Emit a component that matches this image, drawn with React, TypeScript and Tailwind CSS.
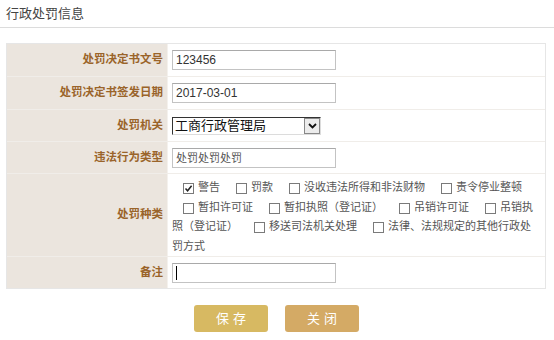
import React from "react";

const FONT = { fontFamily: '"Liberation Sans", "Noto Sans CJK SC", sans-serif' };

function Box({ checked = false }: { checked?: boolean }) {
  return (
    <span className="inline-flex items-center justify-center w-[11px] h-[11px] border border-[#7a7a7a] bg-white mr-[4px] shrink-0 relative top-[1px]">
      {checked && (
        <svg width="9" height="9" viewBox="0 0 9 9">
          <path d="M1.5 4.5 L3.6 6.8 L7.6 1.8" stroke="#222" strokeWidth="1.5" fill="none" />
        </svg>
      )}
    </span>
  );
}

function Item({ checked = false, text, ml = 16 }: { checked?: boolean; text: string; ml?: number }) {
  return (
    <span className="inline-flex items-center whitespace-nowrap" style={{ marginLeft: ml }}>
      <Box checked={checked} />
      <span>{text}</span>
    </span>
  );
}

function Label({ children }: { children: React.ReactNode }) {
  return (
    <div className="bg-[#ebe5de] flex items-center justify-end pr-[4px] text-[11.5px] font-bold text-[#9a642a] border-r border-[#f4f1ed]">
      {children}
    </div>
  );
}

function TextBox({ value, caret = false }: { value?: string; caret?: boolean }) {
  return (
    <div className="w-[164px] h-[20px] border border-[#c3c3c3] border-t-[#a9a9a9] bg-white text-[12px] text-[#333] leading-[16px] pl-[3px] flex items-start pt-[1px]">
      {caret ? <span className="inline-block w-[1px] h-[14px] bg-black mt-[1px]" /> : value}
    </div>
  );
}

export default function App() {
  return (
    <div className="w-[554px] h-[340px] bg-white relative" style={FONT}>
      <div className="h-[28px] border-b border-[#dcdcdc] pl-[6px] flex items-center text-[13px] text-[#444]">
        行政处罚信息
      </div>
      <div className="mx-[6px] mt-[15px] border border-[#e6e6e6] w-[540px]">
        <div className="grid grid-cols-[161px_1fr] h-[33px] border-b border-[#f0ede9]">
          <Label>处罚决定书文号</Label>
          <div className="flex items-center pl-[4px]"><TextBox value="123456" /></div>
        </div>
        <div className="grid grid-cols-[161px_1fr] h-[33px] border-b border-[#f0ede9]">
          <Label>处罚决定书签发日期</Label>
          <div className="flex items-center pl-[4px]"><TextBox value="2017-03-01" /></div>
        </div>
        <div className="grid grid-cols-[161px_1fr] h-[32px] border-b border-[#f0ede9]">
          <Label>处罚机关</Label>
          <div className="flex items-center pl-[4px]">
            <div className="w-[149px] h-[18px] border border-[#dcdcdc] border-t-[#333] border-l-[#333] bg-white flex items-center text-[13px] text-[#111]">
              <span className="pl-[2px] flex-1 leading-none">工商行政管理局</span>
              <span className="w-[16px] h-[16px] border border-[#888] bg-[#ececec] flex items-center justify-center">
                <svg width="9" height="6" viewBox="0 0 9 6">
                  <path d="M1 1 L4.5 4.5 L8 1" stroke="#111" strokeWidth="1.8" fill="none" />
                </svg>
              </span>
            </div>
          </div>
        </div>
        <div className="grid grid-cols-[161px_1fr] h-[32px] border-b border-[#f0ede9]">
          <Label>违法行为类型</Label>
          <div className="flex items-center pl-[4px]">
            <div className="w-[164px] h-[20px] border border-[#c3c3c3] border-t-[#a9a9a9] bg-white text-[11px] text-[#555] leading-[16px] pl-[3px] pt-[1px]">
              处罚处罚处罚
            </div>
          </div>
        </div>
        <div className="grid grid-cols-[161px_1fr] h-[83px] border-b border-[#f0ede9]">
          <Label>处罚种类</Label>
          <div className="pl-[4px] pt-[4px] text-[11px] text-[#555] leading-[19.5px]">
            <div className="flex items-center h-[19.5px]">
              <Item checked text="警告" ml={11} />
              <Item text="罚款" />
              <Item text="没收违法所得和非法财物" />
              <Item text="责令停业整顿" />
            </div>
            <div className="flex items-center h-[19.5px]">
              <Item text="暂扣许可证" ml={11} />
              <Item text="暂扣执照（登记证）" />
              <Item text="吊销许可证" />
              <Item text="吊销执" />
            </div>
            <div className="flex items-center h-[19.5px]">
              <span className="whitespace-nowrap">照（登记证）</span>
              <Item text="移送司法机关处理" />
              <Item text="法律、法规规定的其他行政处" />
            </div>
            <div className="flex items-center h-[19.5px]">
              <span>罚方式</span>
            </div>
          </div>
        </div>
        <div className="grid grid-cols-[161px_1fr] h-[31px]">
          <Label>备注</Label>
          <div className="flex items-center pl-[4px]"><TextBox caret /></div>
        </div>
      </div>
      <div className="flex justify-center gap-[17px] mt-[16px] pr-[1px]">
        <button className="w-[74px] h-[27px] rounded-[3px] bg-[#d7b962] text-white text-[13px] tracking-[4px] pl-[4px]">
          保存
        </button>
        <button className="w-[74px] h-[27px] rounded-[3px] bg-[#d4aa65] text-white text-[13px] tracking-[4px] pl-[4px]">
          关闭
        </button>
      </div>
    </div>
  );
}
